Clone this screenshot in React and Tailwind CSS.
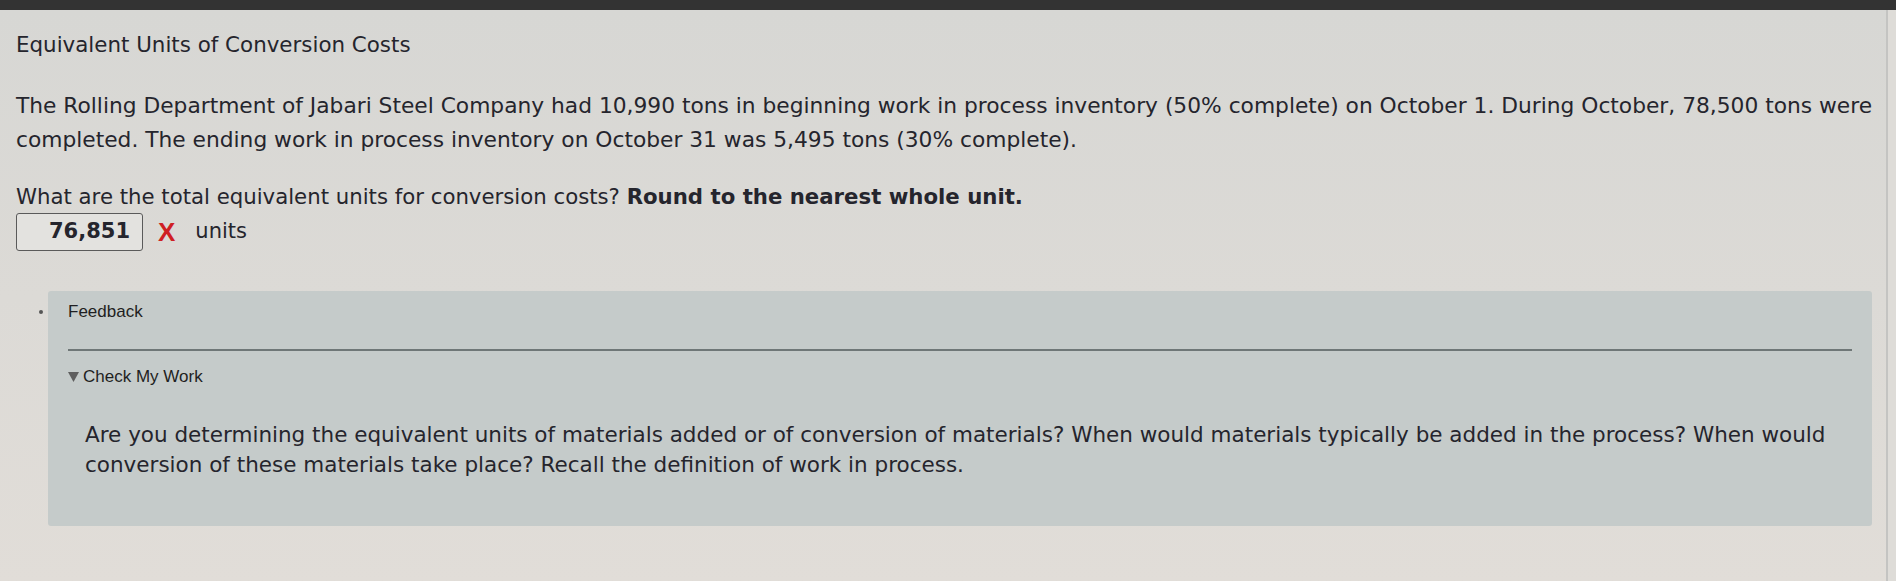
const textFont = { fontFamily: '"DejaVu Sans", Verdana, sans-serif' };

const App = () => {
  return (
    <div className="w-[1896px] h-[581px] flex flex-col overflow-hidden bg-[#d9d8d5]">
      <div className="h-[10px] bg-[#333333]" />
      <div className="flex flex-1">
        <main
          className="flex-1 flex flex-col bg-gradient-to-b from-[#d7d7d4] to-[#e1ddd8] pl-4 pr-[14px] pt-[21px] text-[#25252d]"
          style={textFont}
        >
          <h1 className="text-[21.4px] leading-[28px] font-normal">Equivalent Units of Conversion Costs</h1>

          <p className="mt-[30px] text-[21.75px] leading-[34px] whitespace-nowrap">
            The Rolling Department of Jabari Steel Company had 10,990 tons in beginning work in process inventory (50% complete) on October 1. During October, 78,500 tons were
            <br />
            completed. The ending work in process inventory on October 31 was 5,495 tons (30% complete).
          </p>

          <p className="mt-[26px] text-[21.25px] leading-[28px] whitespace-nowrap">
            What are the total equivalent units for conversion costs? <span className="font-bold">Round to the nearest whole unit.</span>
          </p>

          <div className="mt-[2px] flex items-center h-[38px]">
            <div className="w-[127px] h-[38px] flex items-center justify-end pr-3 border-[1.5px] border-[#5a5a5a] rounded-[3px] bg-[#e3e2df] text-[21px] font-bold">
              76,851
            </div>
            <span className="ml-[15px] text-[#cf1f24] text-[26px] font-bold leading-none" style={{ fontFamily: '"Liberation Sans", Arial, sans-serif' }}>
              X
            </span>
            <span className="ml-[20px] text-[21px]">units</span>
          </div>

          <section className="relative mt-[40px] ml-[32px] rounded-[3px] bg-[#c5cbca] pt-[10px] pb-[46px]">
            <span className="absolute left-[-9px] top-[19px] w-[4px] h-[4px] rounded-full bg-[#555]" />
            <div className="px-5" style={{ fontFamily: '"Liberation Sans", Arial, sans-serif' }}>
              <div className="text-[17px] leading-[22px] text-[#1f1f22]">Feedback</div>
              <div className="mt-[26px] h-[2px] bg-[#6f7777]" />
              <div className="mt-[15px] flex items-center gap-[4px] text-[17px] leading-[22px] text-[#1f1f22]">
                <svg width="11" height="11" viewBox="0 0 10 10" className="mt-[-2px]">
                  <path d="M0 1 L10 1 L5 10 Z" fill="#5f5f5f" />
                </svg>
                <span>Check My Work</span>
              </div>
            </div>
            <p className="mt-[32px] pl-[37px] text-[21.5px] leading-[30px] whitespace-nowrap">
              Are you determining the equivalent units of materials added or of conversion of materials? When would materials typically be added in the process? When would
              <br />
              conversion of these materials take place? Recall the definition of work in process.
            </p>
          </section>
        </main>
        <div className="w-[13px] border-l-2 border-[#c4c4c2] bg-[#dedcd8]" />
      </div>
    </div>
  );
};

export default App;
